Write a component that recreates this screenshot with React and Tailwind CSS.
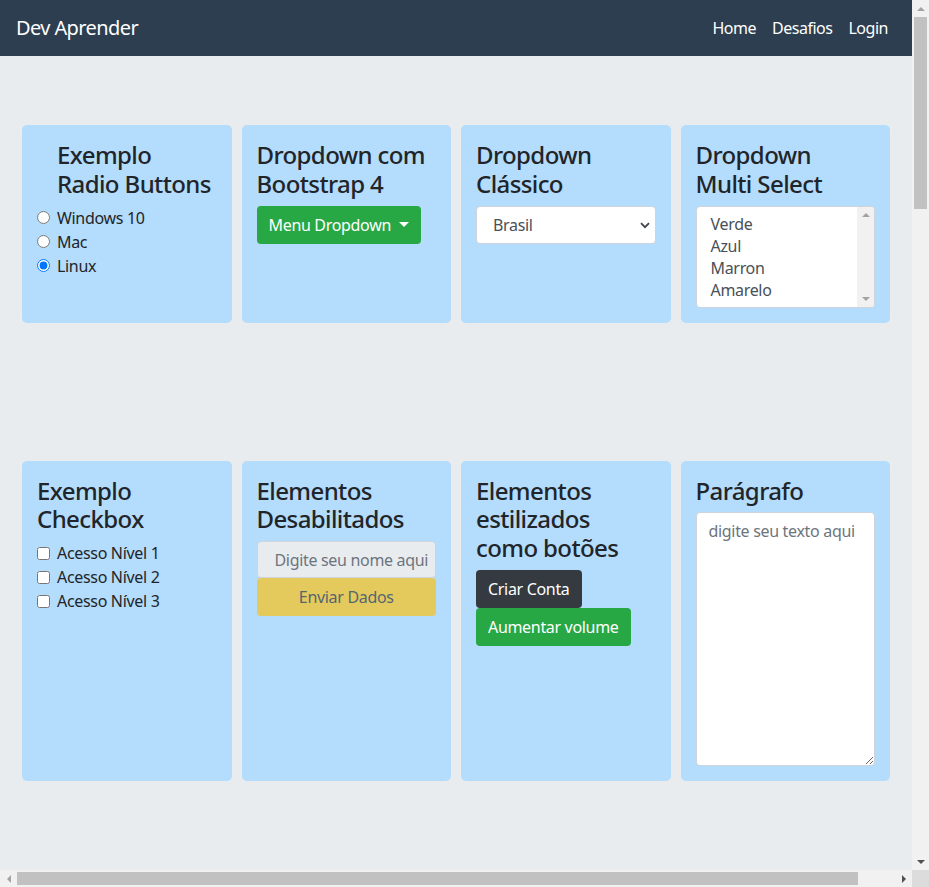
/**
 * Dev Aprender - form elements showcase page
 */

const font = { fontFamily: '"Noto Sans", "Open Sans", Arial, sans-serif' };

function Card({ children }) {
  return <div className="rounded-[5px] bg-[#b4dcfc] p-[15px]">{children}</div>;
}

function CardTitle({ children, className = '' }) {
  return (
    <h4
      className={`mb-[7px] pt-[1px] text-[24px] font-medium leading-[1.2] tracking-[-0.025em] text-[#212529] ${className}`}
    >
      {children}
    </h4>
  );
}

function FormCheck({ type, name, label, checked }) {
  return (
    <div className="flex h-6 items-center">
      <input
        type={type}
        name={name}
        defaultChecked={checked}
        className="m-0 h-[13px] w-[13px]"
      />
      <label className="ml-[7px] text-base text-[#212529]">{label}</label>
    </div>
  );
}

function Button({ color, children }) {
  return (
    <button
      className={`inline-flex h-[38px] items-center rounded-[4px] px-3 text-base leading-6 ${color}`}
    >
      {children}
    </button>
  );
}

function Arrow({ dir, color }) {
  const paths = {
    up: 'M0 4L4 0L8 4Z',
    down: 'M0 0L8 0L4 4Z',
    left: 'M4 0L4 8L0 4Z',
    right: 'M0 0L4 4L0 8Z',
  };
  const vertical = dir === 'up' || dir === 'down';
  return (
    <svg
      width={vertical ? 8 : 4}
      height={vertical ? 4 : 8}
      viewBox={vertical ? '0 0 8 4' : '0 0 4 8'}
    >
      <path d={paths[dir]} fill={color} />
    </svg>
  );
}

function Navbar() {
  return (
    <nav className="flex h-14 w-full shrink-0 items-center justify-between bg-[#2c3e50] px-4">
      <a href="#" className="text-[20px] leading-[30px] tracking-[-0.03em] text-white">
        Dev Aprender
      </a>
      <ul className="flex">
        {['Home', 'Desafios', 'Login'].map((item) => (
          <li key={item}>
            <a href="#" className="block px-2 py-2 text-base tracking-[-0.03em] text-white">
              {item}
            </a>
          </li>
        ))}
      </ul>
    </nav>
  );
}

function MultiSelect() {
  return (
    <div className="flex h-[102px] w-full overflow-hidden rounded-[4px] border border-[#ced4da] bg-white">
      <ul className="flex-1 py-[6px] pl-[14px] text-base leading-[22px] text-[#495057]">
        <li>Verde</li>
        <li>Azul</li>
        <li>Marron</li>
        <li>Amarelo</li>
      </ul>
      <div className="flex w-[17px] flex-col items-center justify-between bg-[#f1f1f1] py-[6px]">
        <Arrow dir="up" color="#a3a3a3" />
        <Arrow dir="down" color="#a3a3a3" />
      </div>
    </div>
  );
}

function Page() {
  return (
    <div className="min-h-full w-full bg-[#e9ecef] tracking-[-0.02em] text-[#212529]">
      <Navbar />

      <main className="px-[22px] pt-[69px] pb-10">
        {/* Row 1 */}
        <div className="grid grid-cols-4 gap-[10px]">
          <Card>
            <CardTitle className="pl-5">
              Exemplo
              <br />
              Radio Buttons
            </CardTitle>
            <FormCheck type="radio" name="os" label="Windows 10" />
            <FormCheck type="radio" name="os" label="Mac" />
            <FormCheck type="radio" name="os" label="Linux" checked />
          </Card>

          <Card>
            <CardTitle>
              Dropdown com
              <br />
              Bootstrap 4
            </CardTitle>
            <Button color="bg-[#28a745] text-white">
              Menu Dropdown
              <span className="ml-[8px] inline-block h-0 w-0 border-x-[5px] border-t-[5px] border-x-transparent border-t-white" />
            </Button>
          </Card>

          <Card>
            <CardTitle>
              Dropdown
              <br />
              Clássico
            </CardTitle>
            <div className="relative">
              <select className="h-[38px] w-full appearance-none rounded-[4px] border border-[#ced4da] bg-white pl-4 pr-8 text-base text-[#495057] outline-none">
                <option>Brasil</option>
                <option>Portugal</option>
                <option>Angola</option>
              </select>
              <svg
                className="pointer-events-none absolute right-[6px] top-[16px]"
                width="10"
                height="7"
                viewBox="0 0 10 7"
              >
                <path d="M1 1.2l4 4 4-4" fill="none" stroke="#3f454b" strokeWidth="1.8" />
              </svg>
            </div>
          </Card>

          <Card>
            <CardTitle>
              Dropdown
              <br />
              Multi Select
            </CardTitle>
            <MultiSelect />
          </Card>
        </div>

        {/* Row 2 */}
        <div className="mt-[138px] grid grid-cols-4 gap-[10px]">
          <Card>
            <CardTitle>
              Exemplo
              <br />
              Checkbox
            </CardTitle>
            <FormCheck type="checkbox" label="Acesso Nível 1" />
            <FormCheck type="checkbox" label="Acesso Nível 2" />
            <FormCheck type="checkbox" label="Acesso Nível 3" />
          </Card>

          <Card>
            <CardTitle>
              Elementos
              <br />
              Desabilitados
            </CardTitle>
            <input
              disabled
              placeholder="Digite seu nome aqui"
              className="block h-[37px] w-full rounded-[4px] border border-[#ced4da] bg-[#e9ecef] pl-[17px] text-base text-[#495057] placeholder:text-[#6c757d]"
            />
            <button
              disabled
              className="block h-[38px] w-full rounded-[4px] bg-[#ffc107] text-base text-[#212529] opacity-65"
            >
              Enviar Dados
            </button>
          </Card>

          <Card>
            <CardTitle>
              Elementos
              <br />
              estilizados
              <br />
              como botões
            </CardTitle>
            <div className="flex flex-col items-start">
              <Button color="bg-[#343a40] text-white">Criar Conta</Button>
              <Button color="bg-[#28a745] text-white">Aumentar volume</Button>
            </div>
          </Card>

          <Card>
            <CardTitle>Parágrafo</CardTitle>
            <textarea
              placeholder="digite seu texto aqui"
              className="block h-[254px] w-full rounded-[4px] border border-[#ced4da] bg-white px-3 py-[6px] text-base text-[#495057] outline-none placeholder:text-[#6c757d]"
            />
          </Card>
        </div>
      </main>
    </div>
  );
}

export default function App() {
  return (
    <div className="flex h-[887px] w-[929px] flex-col overflow-hidden bg-[#f1f1f1]" style={font}>
      <div className="flex h-[870px]">
        {/* viewport */}
        <div className="w-[912px] overflow-hidden">
          <Page />
        </div>
        {/* vertical scrollbar */}
        <div className="flex w-[17px] flex-col bg-[#f1f1f1]">
          <div className="flex h-[17px] items-center justify-center">
            <Arrow dir="up" color="#a3a3a3" />
          </div>
          <div className="flex-1">
            <div className="mx-[2px] h-[192px] bg-[#c1c1c1]" />
          </div>
          <div className="flex h-[17px] items-center justify-center">
            <Arrow dir="down" color="#505050" />
          </div>
        </div>
      </div>
      <div className="flex h-[17px]">
        {/* horizontal scrollbar */}
        <div className="flex w-[912px] bg-[#f1f1f1]">
          <div className="flex w-[17px] items-center justify-center">
            <Arrow dir="left" color="#a3a3a3" />
          </div>
          <div className="flex-1 py-[2px]">
            <div className="h-full w-[841px] bg-[#c1c1c1]" />
          </div>
          <div className="flex w-[17px] items-center justify-center">
            <Arrow dir="right" color="#505050" />
          </div>
        </div>
        <div className="w-[17px] bg-[#dcdcdc]" />
      </div>
    </div>
  );
}
